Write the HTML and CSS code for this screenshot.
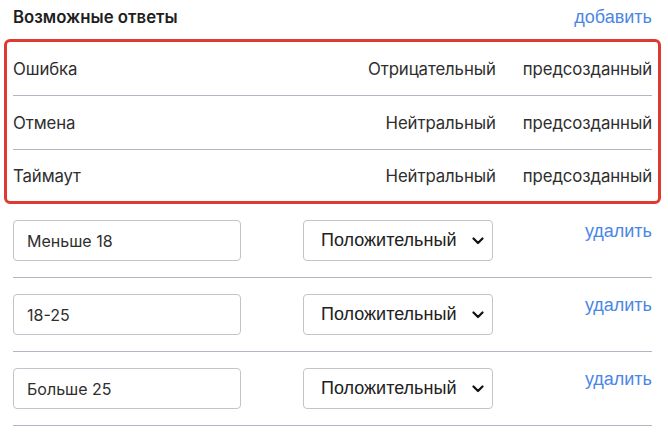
FILE: index.html
```html
<!DOCTYPE html>
<html lang="ru">
<head>
<meta charset="utf-8">
<link rel="stylesheet" href="styles.css">
</head>
<body>
<div class="page">
  <div class="header">
    <div class="title">Возможные ответы</div>
    <a class="link add">добавить</a>
  </div>
  <div class="preset">
    <div class="prow"><span class="pname">Ошибка</span><span class="ptype">Отрицательный</span><span class="pkind">предсозданный</span></div>
    <div class="prow"><span class="pname">Отмена</span><span class="ptype">Нейтральный</span><span class="pkind">предсозданный</span></div>
    <div class="prow"><span class="pname">Таймаут</span><span class="ptype">Нейтральный</span><span class="pkind">предсозданный</span></div>
  </div>
  <div class="answers">
    <div class="arow">
      <div class="field">Меньше 18</div>
      <div class="select"><span>Положительный</span><svg class="chev" viewBox="0 0 12 8" width="12" height="8"><path d="M1.5 1.5 L6 6 L10.5 1.5" fill="none" stroke="#111" stroke-width="2.2" stroke-linecap="round" stroke-linejoin="round"/></svg></div>
      <a class="link del">удалить</a>
    </div>
    <div class="arow">
      <div class="field">18-25</div>
      <div class="select"><span>Положительный</span><svg class="chev" viewBox="0 0 12 8" width="12" height="8"><path d="M1.5 1.5 L6 6 L10.5 1.5" fill="none" stroke="#111" stroke-width="2.2" stroke-linecap="round" stroke-linejoin="round"/></svg></div>
      <a class="link del">удалить</a>
    </div>
    <div class="arow">
      <div class="field">Больше 25</div>
      <div class="select"><span>Положительный</span><svg class="chev" viewBox="0 0 12 8" width="12" height="8"><path d="M1.5 1.5 L6 6 L10.5 1.5" fill="none" stroke="#111" stroke-width="2.2" stroke-linecap="round" stroke-linejoin="round"/></svg></div>
      <a class="link del">удалить</a>
    </div>
  </div>
</div>
</body>
</html>
```
FILE: styles.css
```css
html, body {
  margin: 0;
  padding: 0;
  background: #fff;
}
.page {
  box-sizing: border-box;
  width: 668px;
  padding: 0 16px 0 13px;
  font-family: Inter, "Noto Sans", sans-serif;
  color: #2e2e2e;
}
.header {
  display: flex;
  justify-content: space-between;
  align-items: center;
  height: 34px;
  padding-bottom: 5px;
}
.title {
  font-size: 16.8px;
  font-weight: 600;
  color: #1f1f1f;
}
.link {
  font-family: "Liberation Sans", Arial, sans-serif;
  font-size: 18px;
  color: #4a86e8;
  cursor: pointer;
}
.preset {
  margin: 0 -9px;
  border: 3px solid #e03a30;
  border-radius: 6px;
  padding: 0 6px;
}
.prow {
  display: flex;
  align-items: center;
  height: 53px;
  border-bottom: 1px solid #b4b4c4;
  font-size: 16.8px;
  letter-spacing: -0.1px;
}
.prow:last-child {
  border-bottom: none;
  height: 51px;
}
.pname {
  margin-right: auto;
}
.pkind {
  margin-left: 27px;
}
.arow {
  display: flex;
  align-items: flex-start;
  padding: 16px 0 16px;
  border-bottom: 1px solid #b4b4c4;
}
.field {
  box-sizing: border-box;
  width: 228px;
  height: 41px;
  border: 1px solid #c3c3cb;
  border-radius: 4px;
  padding: 0 13px;
  display: flex;
  align-items: center;
  font-size: 16px;
  color: #2e2e2e;
}
.select {
  box-sizing: border-box;
  width: 190px;
  height: 41px;
  margin-left: 62px;
  border: 1px solid #c3c3cb;
  border-radius: 4px;
  padding: 0 6px 0 17px;
  display: flex;
  align-items: center;
  justify-content: space-between;
  font-family: "Liberation Sans", Arial, sans-serif;
  font-size: 18px;
  color: #222;
}
.chev {
  margin-right: 2px;
}
.del {
  margin-left: auto;
  margin-top: 1px;
}
```
